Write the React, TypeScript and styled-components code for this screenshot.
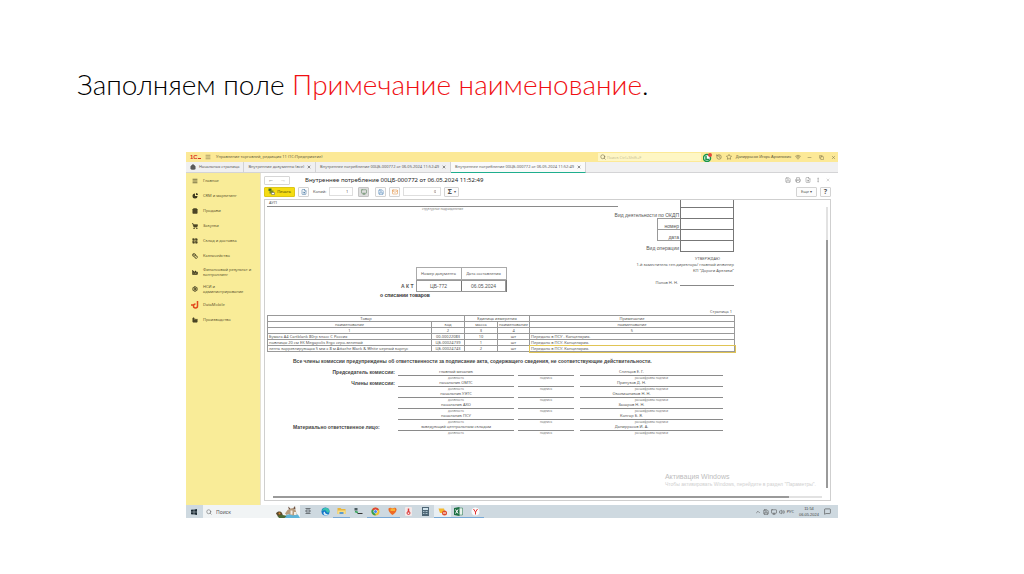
import React from "react";
import styled, { createGlobalStyle, css } from "styled-components";
import {
  Menu, House, ShoppingBag, ShoppingCart, LayoutGrid, Settings, Search, History, Star, Minus, Copy, X,
  ChevronUp, Volume2, MessageSquare, Monitor, Save, Printer, FileSearch, EllipsisVertical, Mail, Wifi, Factory, Coins,
} from "lucide-react";

const arial = `"Liberation Sans", Arial, sans-serif`;

const Global = createGlobalStyle`
  * { box-sizing: border-box; }
  body { margin: 0; background: #fff; font-family: "Noto Sans", "Open Sans", sans-serif; }
  button, input { font-family: inherit; margin: 0; padding: 0; border: 0; background: none; color: inherit; }
`;

const Slide = styled.main`
  padding: 60px 186px 56px;
`;
const Heading = styled.h1`
  margin: 0 -109px 44px;
  font: 300 28px/48px Lato, "Open Sans", sans-serif;
  color: #000;
  white-space: nowrap;
`;
const Accent = styled.span`
  color: #f00f12;
`;

const Desktop = styled.section`
  display: flex;
  flex-direction: column;
  font-size: 4px;
  line-height: 6px;
  color: #555;
  white-space: nowrap;
`;
const TitleBar = styled.header`
  display: flex;
  align-items: center;
  height: 10px;
  padding: 0 2px 0 4px;
  background: #fce997;
  color: #625a3a;
`;
const Logo = styled.span`
  display: flex;
  align-items: flex-end;
  width: 15px;
  font-family: ${arial};
  font-size: 6px;
  font-weight: 700;
  color: #d8331f;
  &::after { content: ""; width: 3px; height: 1px; margin-bottom: 1px; background: #d8331f; }
`;
const AppTitle = styled.span`
  margin-left: 5px;
  flex: 1;
`;
const GlobalSearch = styled.label`
  display: flex;
  align-items: center;
  gap: 1px;
  width: 103px;
  height: 8px;
  padding-left: 2px;
  background: #fef6c4;
  input { width: 90px; height: 6px; font-size: 4px; }
  input::placeholder { color: #c9bf94; opacity: 1; }
`;
const TitleTools = styled.div`
  display: flex;
  align-items: center;
  gap: 4px;
  margin-left: 2px;
  font-family: ${arial};
`;
const IconButton = styled.button`
  display: flex;
  align-items: center;
  justify-content: center;
  min-width: 6px;
  height: 8px;
`;
const WindowButtons = styled.div`
  display: flex;
  gap: 6px;
  margin-left: 5px;
`;

const TabBar = styled.nav`
  display: flex;
  height: 11px;
  background: #f0f0f1;
  border-bottom: 1px solid #d4d4d6;
`;
const Tab = styled.a<{ $active?: boolean }>`
  display: flex;
  align-items: center;
  gap: 3px;
  height: 11px;
  padding: 0 4px;
  border-right: 1px solid #d2d2d4;
  border-bottom: 1px solid transparent;
  color: #5a5a5a;
  text-decoration: none;
  ${(p) => p.$active && css`background: #fafafa; border-bottom-color: #1fae8e;`}
`;

const Body = styled.div`
  display: flex;
  height: 332px;
`;
const Sidebar = styled.nav`
  width: 74px;
  flex: none;
  background: #f9ec98;
`;
const SideItem = styled.a<{ $tall?: boolean }>`
  display: flex;
  align-items: center;
  gap: 5px;
  height: ${(p) => (p.$tall ? 17 : 15)}px;
  padding-left: 6px;
  color: #5d5630;
  line-height: 5px;
  text-decoration: none;
  white-space: pre-line;
  svg { width: 6px; height: 6px; flex: none; color: #4b4526; }
`;

const Work = styled.div`
  flex: 1;
  min-width: 0;
  display: flex;
  flex-direction: column;
  padding: 1px 7px 4px 3px;
  border-left: 1px solid #e6e2d2;
`;
const FormHead = styled.div`
  display: flex;
  align-items: center;
  height: 12px;
`;
const NavPair = styled.div`
  display: flex;
  width: 26px;
  height: 9px;
  border: 1px solid #d6d6d6;
  border-radius: 1px;
  button { flex: 1; font-size: 6px; line-height: 6px; color: #444; }
  button:last-child { color: #aaa; }
`;
const FormTitle = styled.h2`
  flex: 1;
  margin: 0 0 0 15px;
  font-size: 6px;
  font-weight: 400;
  line-height: 8px;
  color: #222;
`;
const HeadTools = styled.div`
  display: flex;
  gap: 4px;
  color: #888;
`;
const Toolbar = styled.div`
  display: flex;
  align-items: center;
  gap: 3px;
  height: 11px;
  margin-bottom: 2px;
`;
const ToolGroup = styled.div`
  display: flex;
  gap: 3px;
  margin-left: 3px;
`;
const ToolButton = styled.button<{ $kind?: "primary" | "pressed" | "sum"; $w?: number }>`
  display: flex;
  align-items: center;
  justify-content: center;
  gap: 2px;
  width: ${(p) => p.$w ?? 11}px;
  height: 10px;
  border: 1px solid #d3d3d3;
  border-radius: 1px;
  background: #fcfcfc;
  font-size: 4px;
  line-height: 6px;
  color: #555;
  ${(p) => p.$kind === "primary" && css`background: #f5dc12; border-color: #dcc619; color: #4c4408;`}
  ${(p) => p.$kind === "pressed" && css`background: #ddd; border-color: #c4c4c4;`}
  b { font-size: 7px; font-weight: 700; }
`;
const NumberField = styled.input<{ $w: number }>`
  && {
    width: ${(p) => p.$w}px;
    height: 9px;
    padding-right: 4px;
    border: 1px solid #dedede;
    font-size: 4px;
    text-align: right;
    color: #555;
  }
`;
const CopyLabel = styled.label`
  display: flex;
  align-items: center;
  gap: 3px;
  margin: 0 2px 0 1px;
`;
const Spacer = styled.span`
  flex: 1;
`;

const Viewer = styled.div`
  position: relative;
  flex: 1;
  display: grid;
  grid-template-columns: 1fr 5px;
  grid-template-rows: 1fr 5px;
  border: 1px solid #cfcfcf;
`;
const VTrack = styled.div`
  width: 2px;
  margin: 7px 1px;
  background: #e2e2e2;
  padding-top: 33px;
`;
const VThumb = styled.div`
  height: 100%;
  background: #9a9a9a;
`;
const HTrack = styled.div`
  height: 2px;
  margin: 1px 3px 0 8px;
  background: #e2e2e2;
`;
const HThumb = styled.div`
  width: 94%;
  height: 100%;
  background: #9a9a9a;
`;
const Watermark = styled.aside`
  position: absolute;
  right: 14px;
  bottom: 12px;
  font-family: ${arial};
  font-size: 5px;
  line-height: 7px;
  color: #cfcfcf;
  strong { display: block; font-size: 7px; font-weight: 400; line-height: 8px; color: #bdbdbd; }
`;

const Paper = styled.article`
  width: 469px;
  padding-left: 2px;
  display: flex;
  flex-direction: column;
  color: #555;
`;
const TopRow = styled.div`
  display: flex;
  justify-content: space-between;
`;
const Unit = styled.div`
  width: 351px;
  height: 7px;
  padding-left: 2px;
  border-bottom: 1px solid #8a8a8a;
`;
const Tiny = styled.div`
  font-size: 3px;
  line-height: 4px;
  text-align: center;
  color: #777;
`;
const Codes = styled.div`
  display: grid;
  grid-template-columns: auto 54px;
  margin-left: -10px;
  font-family: ${arial};
  font-size: 5px;
`;
const CodeLabel = styled.span<{ $first?: boolean }>`
  display: flex;
  align-items: flex-end;
  justify-content: flex-end;
  height: ${(p) => (p.$first ? 8 : 11)}px;
  padding: 0 1px 1px 0;
`;
const CodeBox = styled.span`
  border: 1px solid #777;
  border-top: 0;
`;
const Sub = styled.span`
  display: flex;
  align-items: flex-end;
  justify-content: flex-end;
  width: 23px;
  height: 12px;
  margin: -1px 0 0 auto;
  padding-right: 1px;
  border: 1px solid #999;
  border-right: 0;
`;
const Approve = styled.div`
  margin-top: 4px;
  line-height: 6px;
  text-align: right;
  p { margin: 0; }
  p:first-child { padding-right: 14px; }
`;
const Signer = styled.div`
  display: flex;
  justify-content: flex-end;
  gap: 2px;
  margin-top: 6px;
  &::after { content: ""; width: 54px; border-bottom: 1px solid #888; }
`;
const ActRow = styled.div`
  display: flex;
  align-items: flex-end;
  margin: -19px 0 0 134px;
  font-family: ${arial};
  font-size: 5px;
  font-weight: 700;
  line-height: 11px;
`;
const ActTable = styled.table`
  margin-left: 2px;
  border-collapse: collapse;
  font-weight: 400;
  text-align: center;
  th { height: 12px; width: 45px; padding: 0; border: 1px solid #aaa; font: 400 4px/8px "Noto Sans", sans-serif; }
  td { height: 12px; padding: 0; border: 1px solid #777; font-size: 5px; line-height: 8px; }
  tbody { outline: 1px solid #999; outline-offset: -1px; }
`;
const ActName = styled.div`
  margin: 0 0 1px 113px;
  font-family: ${arial};
  font-size: 5px;
  font-weight: 700;
  color: #333;
`;
const PageNo = styled.div`
  margin-top: 10px;
  padding-right: 2px;
  text-align: right;
`;
const Goods = styled.table`
  width: 468px;
  table-layout: fixed;
  border-collapse: collapse;
  text-align: center;
  th, td { height: 6px; padding: 0 1px; border: 1px solid #999; font-weight: 400; line-height: 5px; overflow: hidden; }
  td:first-child, td:last-child { text-align: left; }
  tr:last-child td:last-child { outline: 1px solid #e0c455; box-shadow: 0 0 2px 2px #fdf6cf; }
  col:nth-child(1) { width: 164px; }
  col:nth-child(2), col:nth-child(3) { width: 33px; }
  col:nth-child(4) { width: 32px; }
`;
const Warning = styled.p`
  margin: 6px 0 5px 26px;
  font-family: ${arial};
  font-size: 5px;
  font-weight: 700;
  color: #444;
`;
const Signatures = styled.div`
  display: grid;
  grid-template-columns: 101px 116px 56px 143px;
  column-gap: 4px;
  margin-left: 26px;
`;
const Role = styled.div<{ $left?: boolean }>`
  margin-right: -1px;
  text-align: ${(p) => (p.$left ? "left" : "right")};
  font-family: ${arial};
  font-size: 5px;
  font-weight: 700;
  line-height: 7px;
  color: #444;
`;
const Cell = styled.div<{ $end?: boolean }>`
  height: 11px;
  margin-left: ${(p) => (p.$end ? 2 : 0)}px;
  margin-right: ${(p) => (p.$end ? -2 : 0)}px;
  text-align: center;
`;
const Line = styled.div<{ $shift?: boolean }>`
  height: 7px;
  padding-right: ${(p) => (p.$shift ? 40 : 0)}px;
  border-bottom: 1px solid #8a8a8a;
`;

const Taskbar = styled.footer`
  display: flex;
  align-items: center;
  height: 13px;
  padding-right: 7px;
  background: #ced9e0;
`;
const StartButton = styled.button`
  width: 17px;
  height: 13px;
  padding-left: 5px;
  svg { display: block; }
`;
const TaskSearch = styled.label`
  display: flex;
  align-items: center;
  gap: 4px;
  width: 97px;
  height: 13px;
  padding-left: 3px;
  background: #f1f4f5;
  input { width: 56px; height: 8px; font-size: 5px; }
  input::placeholder { color: #555; opacity: 1; }
`;
const Apps = styled.div`
  display: flex;
  width: 184px;
`;
const AppButton = styled.button<{ $open?: boolean; $active?: boolean }>`
  flex: 1;
  display: flex;
  align-items: center;
  justify-content: center;
  height: 13px;
  border-bottom: 1px solid ${(p) => (p.$open ? "#78a9d6" : "transparent")};
  background: ${(p) => (p.$active ? "#e9eff3" : "transparent")};
`;
const Tray = styled.div`
  display: flex;
  align-items: center;
  gap: 2px;
  color: #444;
`;
const Clock = styled.time`
  margin: 0 3px;
  font-family: ${arial};
  font-size: 4px;
  line-height: 6px;
  text-align: center;
`;

const Pie = () => (
  <svg viewBox="0 0 12 12"><path d="M6 1a5 5 0 1 0 5 5H6z" fill="#3e391f" /><path d="M8 0a4 4 0 0 1 4 4H8z" fill="#3e391f" /></svg>
);
const Bars = () => (
  <svg viewBox="0 0 12 12"><path d="M1 2v9h10M3 10V7h2v3zM6 10V4h2v6zM9 10V6h2v4z" fill="#3e391f" stroke="#3e391f" /></svg>
);
const BigMark = styled.svg`
  && { width: 8px; height: 8px; margin: 0 -1px; }
`;
const DMark = () => (
  <BigMark viewBox="0 0 16 16"><path d="M13 0v10a4 4 0 1 1-4-4M0 8h5" fill="none" stroke="#e2471c" strokeWidth="3" /></BigMark>
);
const PrintIcon = () => (
  <svg width="7" height="7" viewBox="0 0 14 14"><path d="M1 1h6v5H1z" fill="#3d6a2a" /><path d="M3 5h8v6H3z" fill="#7a8b20" /><path d="M7 9h6v4H7z" fill="#fff" stroke="#555" /></svg>
);
const GreenIcon = () => (
  <svg width="9" height="9" viewBox="0 0 18 18"><circle cx="8" cy="10" r="7" fill="#fff" stroke="#18944a" strokeWidth="3" /><path d="M6 6v7h6" fill="none" stroke="#18944a" strokeWidth="3" /><circle cx="14" cy="4" r="4" fill="#e34b3e" /></svg>
);
const Windows = () => (
  <svg width="6" height="6" viewBox="0 0 12 12"><path d="M0 1.5 5.5 1v4.700H0zM6.500.8 12 0v5.700H6.500zM0 6.500h5.500V11L0 10.500zM6.500 6.500H12V12l-5.500-.8z" fill="#1b2a33" /></svg>
);
const Landscape = () => (
  <svg width="24" height="12" viewBox="0 0 48 24">
    <path d="M14 24c4-5 8-7 14-8 8-3 16-2 20 8z" fill="#5fb4d8" />
    <path d="M0 15c3-5 9-5 12-1l2 5-10 2z" fill="#5c4a2c" />
    <path d="M3 20c5-3 12-3 18 0l-4 4H6z" fill="#4b6a35" />
    <path d="M18 15l5-7 4-2 6-2 6 4 3 9-8 2-9-3-4 2z" fill="#b79b7c" />
    <path d="M26 7l-2-6 5 4zM34 5l4-5 1 7z" fill="#6d5140" />
    <path d="M29 9h4v8h-4zM36 12h5v6h-5z" fill="#f2ece3" />
    <circle cx="7" cy="15" r="2" fill="#d8882f" />
  </svg>
);
const Edge = () => (
  <svg width="9" height="9" viewBox="0 0 18 18"><circle cx="9" cy="9" r="8" fill="#1577c8" /><path d="M2 8c1-8 14-9 15 0 0 4-5 4-6 2 0-4-6-4-9-2z" fill="#36c2b0" /><path d="M8 9c-1 5 4 6 7 5-4 5-11 2-10-3z" fill="#d9eefa" /></svg>
);
const Folder = () => (
  <svg width="9" height="8" viewBox="0 0 18 16"><path d="M1 2h6l2 2h8v10H1z" fill="#e8b53c" /><path d="M1 7h16v7H1z" fill="#f8dc83" /><path d="M5 10h8v4H5z" fill="#5b9bd0" /></svg>
);
const Remote = () => (
  <svg width="9" height="8" viewBox="0 0 18 16"><path d="M1 2h6v5H1z" fill="#4b5b5f" /><path d="M7 13h10" stroke="#333" strokeWidth="2" /><path d="M2 9l6 2" stroke="#38a35a" strokeWidth="3" /></svg>
);
const Chrome = () => (
  <svg width="9" height="9" viewBox="0 0 18 18"><circle cx="9" cy="9" r="8" fill="#f1c232" /><path d="M9 9 2 5a8 8 0 0 1 14 0z" fill="#dc4437" /><path d="M9 9 2 5a8 8 0 0 0 7 12z" fill="#2f9d55" /><circle cx="9" cy="9" r="4" fill="#fff" /><circle cx="9" cy="9" r="3" fill="#4384ee" /></svg>
);
const Heart = () => (
  <svg width="9" height="9" viewBox="0 0 18 18"><path d="M1 3c3-3 6-1 8 0 3-2 7-2 8 1 1 5-4 9-8 12C5 13 0 8 1 3z" fill="#ee6a24" /><path d="M5 3h9v5H5z" fill="#f9b233" /></svg>
);
const YandexSheet = () => (
  <svg width="7" height="9" viewBox="0 0 14 18"><rect width="14" height="18" rx="2" fill="#f3e9e9" /><path d="M7 3v8" stroke="#dc3838" strokeWidth="3" /><circle cx="7" cy="12" r="3" fill="none" stroke="#dc3838" strokeWidth="2" /></svg>
);
const Calc = () => (
  <svg width="7" height="9" viewBox="0 0 14 18"><rect width="14" height="18" fill="#4e6675" /><path d="M2 2h10v4H2z" fill="#cfe2ec" /><path d="M2 9h10M2 13h10" stroke="#a9bfcb" strokeWidth="2" strokeDasharray="2 1" /></svg>
);
const OneC = () => (
  <svg width="9" height="9" viewBox="0 0 18 18"><path d="M1 3h11l3 9H4z" fill="#f5b82e" /><circle cx="13" cy="12" r="5" fill="#dd4a2c" /><path d="M10 12h6" stroke="#fff" strokeWidth="2" /></svg>
);
const Excel = () => (
  <svg width="9" height="9" viewBox="0 0 18 18"><path d="M7 2h10v14H7z" fill="#e8f4ec" stroke="#1e7145" /><path d="M0 2l11-2v18L0 16z" fill="#1e7145" /><path d="M3 5l5 8M8 5l-5 8" stroke="#fff" strokeWidth="2" /></svg>
);
const Yandex = () => (
  <svg width="9" height="9" viewBox="0 0 18 18"><circle cx="9" cy="9" r="8" fill="#fafafa" /><path d="M5 4l4 6 4-6M9 10v5" fill="none" stroke="#e33131" strokeWidth="2" /></svg>
);
const TaskView = () => (
  <svg width="6" height="6" viewBox="0 0 12 12"><path d="M1 1h10M1 11h10M2 4h8v4H2z" fill="none" stroke="#4b5257" strokeWidth="1.500" /></svg>
);

const sections = [
  { label: "Главное", icon: <Menu strokeWidth={3} /> },
  { label: "CRM и маркетинг", icon: <Pie /> },
  { label: "Продажи", icon: <ShoppingBag fill="currentColor" /> },
  { label: "Закупки", icon: <ShoppingCart fill="currentColor" strokeWidth={3} /> },
  { label: "Склад и доставка", icon: <LayoutGrid fill="currentColor" /> },
  { label: "Казначейство", icon: <Coins strokeWidth={3} /> },
  { label: "Финансовый результат и\nконтроллинг", icon: <Bars />, tall: true },
  { label: "НСИ и\nадминистрирование", icon: <Settings strokeWidth={4} />, tall: true },
  { label: "DataMobile", icon: <DMark /> },
  { label: "Производство", icon: <Factory fill="currentColor" /> },
];

const goods = [
  ["Бумага А4 Cartblank 80гр класс С Россия", "00-00022083", "10", "шт", "Передано в ПСУ . Канцелярия."],
  ["ножницы 20 см EK Megapolis Ergo серо-зеленый", "ЦБ-00024739", "1", "шт", "Передано в ПСУ. Канцелярия."],
  ["лента корректирующая 5 мм х 8 м Attache Black & White черный корпус", "ЦБ-00024743", "2", "шт", "Передано в ПСУ. Канцелярия."],
];

const signers = [
  ["Председатель комиссии:", "главный механик", "Слепцов Е. Г."],
  ["Члены комиссии:", "начальник ОМТС", "Припузов Д. Н."],
  ["", "начальник УЭТС", "Окоемшников Н. Н."],
  ["", "начальник АХО", "Захаров Н. Н."],
  ["", "начальник ПСУ", "Конгар Б. Я."],
  ["Материально ответственное лицо:", "заведующий центральным складом", "Дапиррасов И. А."],
];

const docTitle = "Внутреннее потребление 00ЦБ-000772 от 06.05.2024 11:52:49";

const taskApps = [
  { name: "Представление задач", icon: <TaskView /> },
  { name: "Edge", icon: <Edge /> },
  { name: "Проводник", icon: <Folder />, open: true },
  { name: "Удалённый доступ", icon: <Remote /> },
  { name: "Chrome", icon: <Chrome />, open: true },
  { name: "Заметки", icon: <Heart />, open: true },
  { name: "Яндекс Документы", icon: <YandexSheet /> },
  { name: "Калькулятор", icon: <Calc /> },
  { name: "1С", icon: <OneC />, open: true, active: true },
  { name: "Excel", icon: <Excel />, open: true },
  { name: "Яндекс", icon: <Yandex />, open: true },
];

function DocumentSheet() {
  return (
    <Paper>
      <TopRow>
        <div>
          <Unit>АУП</Unit>
          <Tiny>структурное подразделение</Tiny>
        </div>
        <Codes>
          <CodeLabel $first /><CodeBox />
          <CodeLabel>Вид деятельности по ОКДП</CodeLabel><CodeBox />
          <Sub>номер</Sub><CodeBox />
          <Sub>дата</Sub><CodeBox />
          <CodeLabel>Вид операции</CodeLabel><CodeBox />
        </Codes>
      </TopRow>
      <Approve>
        <p>УТВЕРЖДАЮ</p>
        <p>1-й заместитель ген.директора/ главный инженер</p>
        <p>КП "Дороги Арктики"</p>
        <Signer>Попов Н. Н.</Signer>
      </Approve>
      <ActRow>
        А К Т
        <ActTable>
          <thead><tr><th>Номер документа</th><th>Дата составления</th></tr></thead>
          <tbody><tr><td>ЦБ-772</td><td>06.05.2024</td></tr></tbody>
        </ActTable>
      </ActRow>
      <ActName>о списании товаров</ActName>
      <PageNo>Страница 1</PageNo>
      <Goods>
        <colgroup><col /><col /><col /><col /><col /></colgroup>
        <thead>
          <tr><th colSpan={2}>Товар</th><th colSpan={2}>Единица измерения</th><th>Примечание</th></tr>
          <tr><th>наименование</th><th>код</th><th>масса</th><th>наименование</th><th>наименование</th></tr>
          <tr><th>1</th><th>2</th><th>3</th><th>4</th><th>5</th></tr>
        </thead>
        <tbody>
          {goods.map((row) => (
            <tr key={row[0]}>{row.map((c, i) => <td key={i}>{c}</td>)}</tr>
          ))}
        </tbody>
      </Goods>
      <Warning>
        Все члены комиссии предупреждены об ответственности за подписание акта, содержащего сведения, не соответствующие действительности.
      </Warning>
      <Signatures>
        {signers.map(([role, post, name]) => (
          <React.Fragment key={post}>
            <Role $left={role.startsWith("Матер")}>{role}</Role>
            <Cell><Line>{post}</Line><Tiny>должность</Tiny></Cell>
            <Cell><Line /><Tiny>подпись</Tiny></Cell>
            <Cell $end><Line $shift>{name}</Line><Tiny>расшифровка подписи</Tiny></Cell>
          </React.Fragment>
        ))}
      </Signatures>
    </Paper>
  );
}

export default function App() {
  return (
    <>
      <Global />
      <Slide>
        <Heading>Заполняем поле <Accent>Примечание наименование</Accent>.</Heading>
        <Desktop>
          <TitleBar>
            <Logo>1С</Logo>
            <IconButton aria-label="Меню"><Menu size={6} /></IconButton>
            <AppTitle>Управление торговлей, редакция 11 (1С:Предприятие)</AppTitle>
            <GlobalSearch>
              <Search size={6} />
              <input aria-label="Поиск" placeholder="Поиск Ctrl+Shift+F" />
            </GlobalSearch>
            <TitleTools>
              <IconButton aria-label="Уведомления"><GreenIcon /></IconButton>
              <IconButton aria-label="История"><History size={6} /></IconButton>
              <IconButton aria-label="Избранное"><Star size={6} /></IconButton>
              <span>Дапиррасов Игорь Архипович</span>
              <IconButton aria-label="Сеть"><Wifi size={6} /></IconButton>
            </TitleTools>
            <WindowButtons>
              <IconButton aria-label="Свернуть"><Minus size={5} /></IconButton>
              <IconButton aria-label="Восстановить"><Copy size={5} /></IconButton>
              <IconButton aria-label="Закрыть"><X size={5} /></IconButton>
            </WindowButtons>
          </TitleBar>
          <TabBar>
            <Tab href="#home"><House size={6} fill="currentColor" />Начальная страница</Tab>
            <Tab href="#docs">Внутренние документы (все) <X size={4} strokeWidth={4} /></Tab>
            <Tab href="#doc">{docTitle} <X size={4} strokeWidth={4} /></Tab>
            <Tab href="#print" $active>{docTitle} <X size={4} strokeWidth={4} /></Tab>
          </TabBar>
          <Body>
            <Sidebar>
              {sections.map((s) => (
                <SideItem key={s.label} href="#section" $tall={s.tall}>{s.icon}{s.label}</SideItem>
              ))}
            </Sidebar>
            <Work>
              <FormHead>
                <NavPair><button aria-label="Назад">←</button><button aria-label="Вперёд">→</button></NavPair>
                <FormTitle>{docTitle}</FormTitle>
                <HeadTools>
                  <IconButton aria-label="Сохранить"><Save size={6} /></IconButton>
                  <IconButton aria-label="Печать"><Printer size={6} /></IconButton>
                  <IconButton aria-label="Просмотр"><FileSearch size={6} /></IconButton>
                  <IconButton aria-label="Ещё"><EllipsisVertical size={6} /></IconButton>
                  <IconButton aria-label="Закрыть"><X size={4} /></IconButton>
                </HeadTools>
              </FormHead>
              <Toolbar>
                <ToolButton $kind="primary" $w={31}><PrintIcon />Печать</ToolButton>
                <ToolButton aria-label="Предпросмотр"><FileSearch size={6} color="#3b6f9c" /></ToolButton>
                <CopyLabel>Копий: <NumberField $w={24} defaultValue="1" /></CopyLabel>
                <ToolButton $kind="pressed" aria-label="Правка"><Monitor size={6} color="#4d7b4f" /></ToolButton>
                <ToolGroup>
                  <ToolButton aria-label="Сохранить файл"><Save size={6} color="#3f7bb5" /></ToolButton>
                  <ToolButton aria-label="Отправить"><Mail size={6} color="#e0862e" /></ToolButton>
                </ToolGroup>
                <NumberField $w={38} defaultValue="0" aria-label="Сумма" />
                <ToolButton $w={15}><b>Σ</b>▾</ToolButton>
                <Spacer />
                <ToolButton $w={21}>Еще ▾</ToolButton>
                <ToolButton><b>?</b></ToolButton>
              </Toolbar>
              <Viewer>
                <DocumentSheet />
                <VTrack><VThumb /></VTrack>
                <HTrack><HThumb /></HTrack>
                <Watermark>
                  <strong>Активация Windows</strong>
                  Чтобы активировать Windows, перейдите в раздел "Параметры".
                </Watermark>
              </Viewer>
            </Work>
          </Body>
          <Taskbar>
            <StartButton aria-label="Пуск"><Windows /></StartButton>
            <TaskSearch>
              <Search size={6} />
              <input aria-label="Поиск в Windows" placeholder="Поиск" />
              <Landscape />
            </TaskSearch>
            <Apps>
              {taskApps.map((a) => (
                <AppButton key={a.name} aria-label={a.name} $open={a.open} $active={a.active}>{a.icon}</AppButton>
              ))}
            </Apps>
            <Spacer />
            <Tray>
              <ChevronUp size={6} />
              <Save size={6} />
              <Monitor size={6} />
              <Volume2 size={6} />
              <span>РУС</span>
              <Clock>11:54<br />06.05.2024</Clock>
              <MessageSquare size={7} />
            </Tray>
          </Taskbar>
        </Desktop>
      </Slide>
    </>
  );
}
